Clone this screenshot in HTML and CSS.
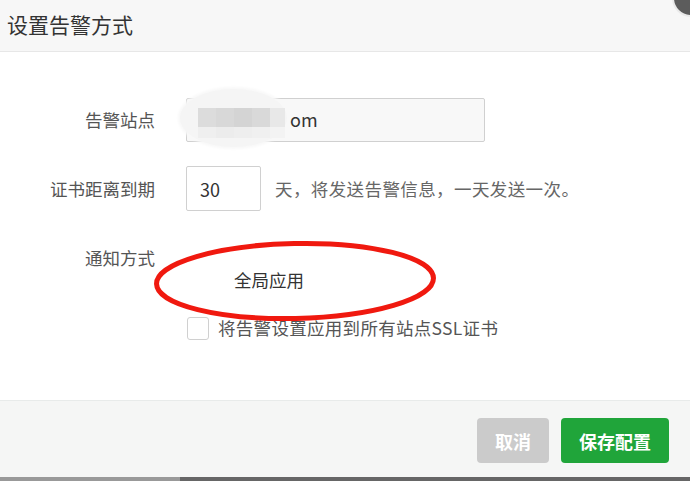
FILE: index.html
```html
<!DOCTYPE html>
<html lang="zh-CN">
<head>
<meta charset="utf-8">
<title>设置告警方式</title>
<link rel="stylesheet" href="styles.css">
</head>
<body>
<div class="dialog">
  <div class="header">设置告警方式</div>
  <div class="close"></div>
  <div class="content">
    <div class="row row-site">
      <div class="label">告警站点</div>
      <div class="field site">
        <div class="blur">
          <div class="mosaic">
            <span class="c1"></span><span class="c2"></span><span class="c3"></span><span class="c4"></span><span class="c5"></span>
            <span class="d1"></span><span class="d2"></span><span class="d3"></span><span class="d4"></span><span class="d5"></span>
          </div>
        </div>
        <span class="site-text">om</span>
      </div>
    </div>
    <div class="row row-days">
      <div class="label">证书距离到期</div>
      <div class="field days">30</div>
      <div class="suffix">天，将发送告警信息，一天发送一次。</div>
    </div>
    <div class="row row-notify">
      <div class="label">通知方式</div>
      <div class="notify">全局应用</div>
    </div>
    <div class="row row-check">
      <div class="checkbox"></div>
      <div class="check-text">将告警设置应用到所有站点SSL证书</div>
    </div>
  </div>
  <div class="footer">
    <button class="btn btn-cancel">取消</button>
    <button class="btn btn-save">保存配置</button>
  </div>
  <svg class="mark" width="286" height="84" viewBox="0 0 286 84">
    <ellipse cx="143" cy="42" rx="138.5" ry="37.5" fill="none" stroke="#f0190f" stroke-width="5" transform="rotate(-1.2 143 42)"/>
  </svg>
</div>
<div class="strip"><div class="strip-left"></div><div class="strip-right"></div></div>
</body>
</html>
```

FILE: styles.css
```css
html, body {
  margin: 0;
  padding: 0;
}
body {
  width: 690px;
  height: 481px;
  overflow: hidden;
  background: #fff;
  font-family: "Noto Sans CJK SC", "Noto Sans", sans-serif;
  color: #555;
}
.dialog {
  position: relative;
  height: 477px;
  display: flex;
  flex-direction: column;
  background: #fff;
}
.header {
  box-sizing: border-box;
  height: 52px;
  padding: 0 0 3px 7px;
  display: flex;
  align-items: center;
  font-size: 21px;
  color: #333;
  background: #f7f7f7;
  border-bottom: 1px solid #e7e7e7;
}
.close {
  position: absolute;
  left: 672px;
  top: -21px;
  width: 34px;
  height: 34px;
  border-radius: 50%;
  background: #5c5c5c;
  border: 2px solid #e9e9e9;
}
.content {
  flex: 1;
  padding-top: 46px;
  font-size: 17.5px;
}
.row {
  display: flex;
  align-items: center;
}
.label {
  width: 155px;
  margin-right: 31px;
  text-align: right;
  color: #555;
  line-height: 24px;
  flex: none;
}
.field {
  box-sizing: border-box;
  border: 1px solid #d0d0d0;
  border-radius: 2px;
  color: #333;
  font-size: 18px;
  display: flex;
  align-items: center;
}
.site {
  position: relative;
  width: 299px;
  height: 44px;
  background: #f8f8f8;
  padding-left: 103px;
}
.site-text {
  position: relative;
  top: -1px;
}
.blur {
  position: absolute;
  left: -7px;
  top: -10px;
  width: 107px;
  height: 58px;
  border-radius: 50%;
  background: #f5f5f5;
  box-shadow: 0 0 3px 2px #f8f8f8;
}
.mosaic {
  position: absolute;
  left: 18px;
  top: 19px;
  width: 87px;
  display: grid;
  grid-template-columns: 18px 18px 18px 18px 15px;
  grid-template-rows: 19px 11px;
}
.c1 { background: #dcdcdc; }
.c2 { background: #d8d8d8; }
.c3 { background: #d4d4d4; }
.c4 { background: #d9d9d9; }
.c5 { background: #e8e8e8; }
.d1 { background: #efefef; }
.d2 { background: #ececec; }
.d3 { background: #eeeeee; }
.d4 { background: #f0f0f0; }
.d5 { background: #f3f3f3; }
.row-days {
  margin-top: 24px;
}
.days {
  width: 75px;
  height: 45px;
  padding-left: 13px;
  background: #fff;
}
.suffix {
  margin-left: 14px;
  color: #666;
  letter-spacing: 0.4px;
}
.row-notify {
  margin-top: 35px;
  align-items: flex-start;
}
.notify {
  padding-top: 22px;
  padding-left: 48px;
  line-height: 24px;
  color: #333;
}
.row-check {
  margin-top: 24px;
  padding-left: 187px;
}
.checkbox {
  box-sizing: border-box;
  width: 22px;
  height: 23px;
  border: 1px solid #d0d0d0;
  border-radius: 3px;
  background: #fff;
}
.check-text {
  margin-left: 9px;
  color: #555;
  line-height: 24px;
  letter-spacing: 0.3px;
}
.footer {
  box-sizing: border-box;
  height: 77px;
  border-top: 1px solid #e8ebea;
  background: #f5f6f5;
  display: flex;
  justify-content: flex-end;
  align-items: flex-start;
  padding: 17px 21px 0 0;
  gap: 12px;
}
.btn {
  height: 45px;
  border: none;
  border-radius: 4px;
  color: #fff;
  font-family: "Noto Sans CJK SC", sans-serif;
  font-size: 18px;
  font-weight: bold;
  padding: 0;
}
.btn-cancel {
  width: 72px;
  background: #cbcbcb;
}
.btn-save {
  width: 108px;
  background: #20a53a;
}
.mark {
  position: absolute;
  left: 152px;
  top: 239px;
}
.strip {
  display: flex;
  height: 4px;
}
.strip-left {
  width: 180px;
  background: #999;
}
.strip-right {
  flex: 1;
  background: #666;
}
```
